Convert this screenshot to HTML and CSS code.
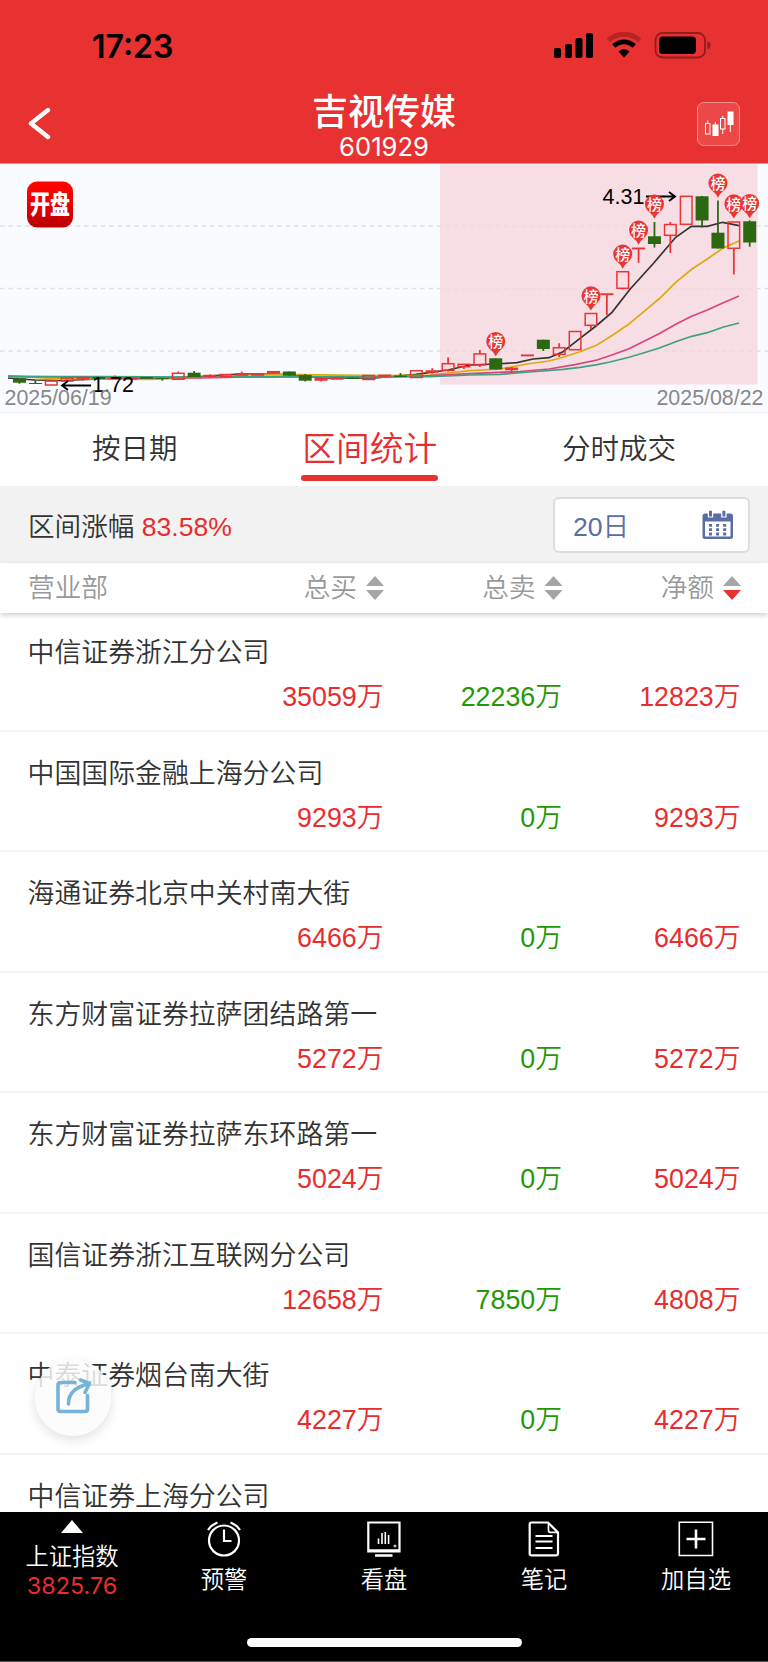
FILE: index.html
```
<!DOCTYPE html>
<html lang="zh-CN">
<head>
  <meta charset="UTF-8">
  <meta name="viewport" content="width=device-width, initial-scale=1.0">
  <title>吉视传媒 601929</title>
  <link rel="stylesheet" href="styles.css">
</head>
<body>
  <header class="header">
    <div class="status-bar">
      <span class="time">17:23</span>
      <svg class="status-icons" width="160" height="30" viewBox="0 0 160 30">
        <rect x="1" y="17" width="7" height="10" rx="2"/>
        <rect x="12" y="13" width="7" height="14" rx="2"/>
        <rect x="22.500" y="7" width="7" height="20" rx="2"/>
        <rect x="33" y="2" width="7" height="25" rx="2"/>
        <path d="M55.500 9.500a22.500 22.500 0 0 1 31 0" fill="none" stroke="#b82424" stroke-width="5"/>
        <path d="M60.800 15a14.500 14.500 0 0 1 20.400 0" fill="none" stroke="#000" stroke-width="4.800"/>
        <path d="M65.500 20.500a8 8 0 0 1 11 0L71 26.500z"/>
        <rect x="102.500" y="2" width="49.500" height="24.500" rx="7" fill="none" stroke="#8f1e1e" stroke-width="1.800"/>
        <rect x="106" y="5.500" width="37" height="17.500" rx="4"/>
        <path d="M154.500 10.300q3 1 3 4t-3 4z" fill="#8f1e1e"/>
      </svg>
    </div>
    <div class="title-bar">
      <svg class="back" width="24" height="34" viewBox="0 0 24 34">
        <path d="M21 3L4 16.500 21 30" fill="none" stroke="#fff" stroke-width="4.400" stroke-linecap="round" stroke-linejoin="round"/>
      </svg>
      <div class="title">
        <h1>吉视传媒</h1>
        <p>601929</p>
      </div>
      <div class="kline-button">
        <svg width="42" height="42" viewBox="0 0 42 42" fill="none" stroke="#fff">
          <rect x="7.500" y="20.500" width="4.500" height="10.500"/>
          <path d="M9.700 17.500v3M17.300 19v3M24.800 13v3M24.800 26v5M32.300 21v8"/>
          <rect x="15" y="22" width="5" height="10.500" fill="#fff"/>
          <rect x="22.500" y="15.500" width="4.500" height="10.500"/>
          <rect x="30" y="9" width="5" height="12.500" fill="#fff"/>
        </svg>
      </div>
    </div>
  </header>

  <svg class="chart" id="chart" viewBox="0 164 768 248" width="768" height="248">
    <defs>
      <linearGradient id="logoFill" x1="0" y1="0" x2="0" y2="1">
        <stop offset="0" stop-color="#ff0600"/>
        <stop offset="0.400" stop-color="#f00000"/>
        <stop offset="1" stop-color="#b80000"/>
      </linearGradient>
    </defs>
    <g class="grid">
      <path d="M0 226H768M0 288.500H768M0 351H768"/>
    </g>
    <rect class="range" x="440" y="164.500" width="317.500" height="220"/>
    <g id="averages"></g>
    <g id="candles"></g>
    <g class="arrows">
      <path d="M62 385.500H91M68 381l-6 4.500 6 4.500"/>
      <path d="M646 196.500H675M669 192l6 4.500-6 4.500"/>
    </g>
    <text class="price" x="92" y="391.700">1.72</text>
    <text class="price" x="602.500" y="203.700">4.31</text>
    <g id="markers"></g>
    <text class="date" x="4.500" y="405">2025/06/19</text>
    <text class="date" x="763.500" y="405" text-anchor="end">2025/08/22</text>
    <rect x="27" y="181.500" width="46" height="46" rx="10" fill="url(#logoFill)"/>
    <text class="logo-text" transform="translate(50 214) scale(1 1.300)" text-anchor="middle">开盘</text>
  </svg>

  <nav class="tabs">
    <a class="tab">按日期</a>
    <a class="tab active">区间统计</a>
    <a class="tab">分时成交</a>
  </nav>

  <section class="filter">
    <p>区间涨幅 <span class="red">83.58%</span></p>
    <div class="period">
      <span>20日</span>
      <svg width="32" height="30" viewBox="0 0 32 30">
        <path d="M2.500 3.500H5.800V7.500H11.200V3.500H19.200V7.500H24.600V3.500H28.500Q31 3.500 31 6V26.500Q31 29 28.500 29H3Q.5 29 .5 26.500V6Q.5 3.500 3 3.500zM3 11.500V26.500H28.500V11.500z" fill="#5a6ea5" fill-rule="evenodd"/>
        <path d="M8.500 .8V6.500M21.900 .8V6.500" stroke="#5a6ea5" stroke-width="3"/>
        <path d="M8.500 14V26M15.600 14V26M22.700 14V26" stroke="#5a6ea5" stroke-width="3" stroke-dasharray="2.800 1.500"/>
      </svg>
    </div>
  </section>

  <section class="columns">
    <span>营业部</span>
    <span class="sort">总买 <i class="up"></i><i class="down"></i></span>
    <span class="sort">总卖 <i class="up"></i><i class="down"></i></span>
    <span class="sort">净额 <i class="up"></i><i class="down on"></i></span>
  </section>

  <main class="list">
    <div class="row">
      <h2>中信证券浙江分公司</h2>
      <p><span class="red">35059万</span><span class="green">22236万</span><span class="red">12823万</span></p>
    </div>
    <div class="row">
      <h2>中国国际金融上海分公司</h2>
      <p><span class="red">9293万</span><span class="green">0万</span><span class="red">9293万</span></p>
    </div>
    <div class="row">
      <h2>海通证券北京中关村南大街</h2>
      <p><span class="red">6466万</span><span class="green">0万</span><span class="red">6466万</span></p>
    </div>
    <div class="row">
      <h2>东方财富证券拉萨团结路第一</h2>
      <p><span class="red">5272万</span><span class="green">0万</span><span class="red">5272万</span></p>
    </div>
    <div class="row">
      <h2>东方财富证券拉萨东环路第一</h2>
      <p><span class="red">5024万</span><span class="green">0万</span><span class="red">5024万</span></p>
    </div>
    <div class="row">
      <h2>国信证券浙江互联网分公司</h2>
      <p><span class="red">12658万</span><span class="green">7850万</span><span class="red">4808万</span></p>
    </div>
    <div class="row">
      <h2>中泰证券烟台南大街</h2>
      <p><span class="red">4227万</span><span class="green">0万</span><span class="red">4227万</span></p>
    </div>
    <div class="row">
      <h2>中信证券上海分公司</h2>
    </div>
  </main>

  <div class="share">
    <svg width="38" height="40" viewBox="0 0 38 40" fill="none" stroke="#73b4d8" stroke-width="3.600" stroke-linecap="round" stroke-linejoin="round">
      <path d="M20 5.500H5.500Q3 5.500 3 8V32Q3 34.500 5.500 34.500H30Q32.500 34.500 32.500 32V18.500"/>
      <path d="M13.500 27Q13 12 33 7M25.500 3L34.500 6.500 30 15.500"/>
    </svg>
  </div>

  <footer class="bottom">
    <div class="item index">
      <i class="triangle"></i>
      <span>上证指数</span>
      <b>3825.76</b>
    </div>
    <div class="item">
      <svg width="36" height="36" viewBox="0 0 36 36" fill="none" stroke="#fff" stroke-width="2.200">
        <circle cx="18" cy="19.500" r="15"/>
        <path d="M18 8.500V20H25.500"/>
        <path d="M2 9Q5 4 11.500 1.500M34 9Q31 4 24.500 1.500"/>
      </svg>
      <span>预警</span>
    </div>
    <div class="item">
      <svg width="36" height="36" viewBox="0 0 36 36" fill="none" stroke="#fff" stroke-width="2.200">
        <path d="M2.300 1.500H33.500V30.500H2.300z"/>
        <path d="M3 29.500H33M9 34.500H26.500" stroke-width="2.500"/>
        <path d="M12.500 17.500V23M16 12V23M19.300 11V23M22.600 14V23" stroke-width="1.600"/>
        <circle cx="29" cy="25" r="1" stroke-width="1"/>
      </svg>
      <span>看盘</span>
    </div>
    <div class="item">
      <svg width="36" height="36" viewBox="0 0 36 36" fill="none" stroke="#fff" stroke-width="2.200">
        <path d="M5.500 1.500H22L32 11.500V32.500Q32 34.300 30 34.300H5.500Q3.700 34.300 3.700 32.500V3.300Q3.700 1.500 5.500 1.500z"/>
        <path d="M22.500 2V9.500Q22.500 11.300 24.300 11.300H31.500" stroke-width="1.700"/>
        <path d="M9.500 15H26.500M9.500 20.500H26.500M9.500 27H26.500" stroke-width="1.900"/>
      </svg>
      <span>笔记</span>
    </div>
    <div class="item">
      <svg width="36" height="36" viewBox="0 0 36 36" fill="none" stroke="#fff" stroke-width="1.600">
        <path d="M1.300 1.300H34.500V34.500H1.300z"/>
        <path d="M8.500 18H27.500M18 8.500V27.500" stroke-width="2.600"/>
      </svg>
      <span>加自选</span>
    </div>
    <div class="home-indicator"></div>
  </footer>

  <script src="chart.js"></script>
</body>
</html>
```

FILE: styles.css
```
* {
  box-sizing: border-box;
  margin: 0;
  padding: 0;
}

body {
  width: 768px;
  height: 1662px;
  display: flex;
  flex-direction: column;
  position: relative;
  overflow: hidden;
  background: #fff;
  color: #333;
  font-family: "Liberation Sans", "Noto Sans CJK SC", sans-serif;
  font-size: 27px;
  font-weight: 350;
}

svg {
  display: block;
  flex: none;
}

.red {
  color: #e72d2d;
}

.green {
  color: #1f980a;
}

/* header */
.header {
  height: 164px;
  flex: none;
  background: #e83131;
  border-bottom: 1px solid #f08c8e;
}

.status-bar {
  height: 91px;
  padding: 31px 55.5px 0 92px;
  display: flex;
  justify-content: space-between;
}

.time {
  font: 600 32px/31px Inter, sans-serif;
  color: #000;
}

.title-bar {
  height: 72px;
  padding: 0 28px 0 27px;
  display: grid;
  grid-template-columns: 44px 1fr 43px;
  color: #fff;
}

.back {
  margin-top: 16px;
}

.title {
  text-align: center;
}

.title h1 {
  font-size: 36px;
  line-height: 44px;
  font-weight: 500;
}

.title p {
  font: 400 25.6px/24px Inter, sans-serif;
}

.kline-button {
  width: 43px;
  height: 44px;
  margin-top: 11px;
  border: 1px solid #f38f8f;
  border-radius: 7px;
  background: #ec4848;
}

/* chart */
.chart {
  background: #fafbff;
}

.grid {
  stroke: #e0e1e6;
  stroke-width: 1.3;
  stroke-dasharray: 4.5 3.9;
}

.range {
  fill: #f5d5dc;
  fill-opacity: 0.76;
}

.arrows {
  fill: none;
  stroke: #000;
  stroke-width: 1.8;
}

.price {
  font-size: 21.5px;
  fill: #000;
}

.date {
  font-size: 21.4px;
  fill: #888;
}

.logo-text {
  font-family: "Noto Sans CJK SC", sans-serif;
  font-size: 20px;
  font-weight: 900;
  fill: #fff;
}

.marker-text {
  font-family: "Noto Sans CJK SC", sans-serif;
  font-size: 15px;
  font-weight: 500;
  fill: #fff;
}

/* tabs */
.tabs {
  height: 74px;
  flex: none;
  padding: 0 92px;
  display: flex;
  justify-content: space-between;
  border-top: 1px solid #eeeff2;
}

.tab {
  font-size: 28.5px;
  line-height: 73px;
}

.tab.active {
  display: flex;
  flex-direction: column;
  padding: 0 1px;
  font-size: 33.7px;
  line-height: 73px;
  color: #e72d2d;
}

.tab.active::after {
  content: "";
  height: 5.5px;
  margin: -11px -1px 0;
  border-radius: 3px;
  background: #e83131;
}

/* filter */
.filter {
  height: 77px;
  flex: none;
  padding: 0 18px 0 28px;
  display: flex;
  align-items: center;
  justify-content: space-between;
  background: #f2f2f2;
  font-size: 26.6px;
}

.period {
  width: 197px;
  height: 56px;
  padding: 0 14px 0 18px;
  display: flex;
  align-items: center;
  justify-content: space-between;
  border: 2px solid #ddd;
  border-radius: 6px;
  background: #fff;
  color: #5a6ea5;
}

/* column heads */
.columns {
  height: 50px;
  flex: none;
  padding: 0 27px 0 28px;
  display: grid;
  grid-template-columns: 1fr 178.5px 178.5px 178.5px;
  font-size: 26.7px;
  line-height: 51px;
  color: #999;
  box-shadow: 0 2px 5px rgba(0, 0, 0, 0.2);
  z-index: 1;
}

.sort {
  display: grid;
  grid-template-areas: "label up" "label down";
  grid-template-columns: 1fr 18px;
  grid-template-rows: 25px 25px;
  column-gap: 9px;
  text-align: right;
}

.up,
.down {
  width: 18px;
  height: 10px;
  background: #a5a5a5;
}

.up {
  grid-area: up;
  align-self: end;
  margin-bottom: 2px;
  clip-path: polygon(50% 0, 100% 100%, 0 100%);
}

.down {
  grid-area: down;
  margin-top: 2px;
  clip-path: polygon(0 0, 100% 0, 50% 100%);
}

.down.on {
  background: #e83131;
}

/* list */
.list {
  height: 901px;
  flex: none;
  margin-top: -2px;
  overflow: hidden;
}

.row {
  height: 120.5px;
  padding: 22px 27.5px 0;
  border-bottom: 2px solid #f4f4f4;
}

.row h2 {
  font-size: 26.9px;
  font-weight: 350;
  line-height: 40px;
}

.row p {
  display: grid;
  grid-template-columns: 1fr 178.5px 178.5px;
  font-size: 26.8px;
  line-height: 40px;
  padding-top: 4px;
  text-align: right;
}

/* floating share button */
.share {
  position: absolute;
  left: 35px;
  top: 1359px;
  width: 76px;
  height: 77px;
  padding: 18px 0 0 20px;
  border-radius: 50%;
  background: rgba(251, 251, 251, 0.83);
  box-shadow: 0 4px 12px rgba(0, 0, 0, 0.12);
  z-index: 2;
}

/* bottom bar */
.bottom {
  height: 150px;
  flex: none;
  margin-top: auto;
  padding-top: 8px;
  display: grid;
  grid-template-columns: 144px 160px 160px 160px 144px;
  grid-template-rows: 118px 10px;
  background: #000;
  border-bottom: 1px solid #555;
  color: #fff;
  z-index: 1;
}

.item {
  display: flex;
  flex-direction: column;
  align-items: center;
  font-size: 23.3px;
  line-height: 30px;
}

.item svg {
  margin-top: 1px;
  margin-bottom: 8px;
}

.triangle {
  width: 22px;
  height: 13px;
  background: #fff;
  clip-path: polygon(50% 0, 100% 100%, 0 100%);
}

.index span {
  margin-top: 9px;
}

.index b {
  font: 400 23.4px/28px Inter, sans-serif;
  color: #e72d2d;
}

.home-indicator {
  grid-column: 1 / -1;
  justify-self: center;
  width: 275px;
  height: 9px;
  border-radius: 5px;
  background: #fff;
}
```

FILE: chart.js
```
const NS = 'http://www.w3.org/2000/svg';
const RED = '#e93535';
const GREEN = '#2c6811';
const FIRST_X = 19.5;
const STEP = 15.874;

// [colour, body top, body bottom, high, low]
const candles = [
  ['g', 378.3, 382.7, 378, 383.7], ['g', 383, 384, 380.5, 384], ['r', 381, 385, 381, 385],
  ['r', 378, 381, 378, 381], ['r', 377.5, 378.5, 377, 380.5], ['g', 377, 379, 377, 379],
  ['r', 378, 378.7, 375.5, 379], ['r', 378, 379, 378, 379], ['g', 377, 378.7, 377, 379],
  ['g', 378, 379, 378, 380.7], ['r', 373.3, 379.3, 371.5, 379], ['g', 372.7, 377, 371, 377],
  ['r', 375.5, 376.3, 374.3, 377.5], ['r', 374.5, 376.7, 374, 377], ['r', 374, 375, 371.7, 375],
  ['r', 374, 375, 374, 375], ['r', 371.7, 373, 371, 373.5], ['g', 371.5, 375.7, 371.5, 376],
  ['g', 374.9, 380.7, 374, 381.5], ['r', 378.7, 380, 378, 381.5], ['r', 378, 379, 378, 379],
  ['g', 377.6, 379, 377.5, 379], ['r', 375.5, 379.5, 375, 380], ['r', 375.3, 376, 375, 378],
  ['g', 375.5, 377, 373, 377], ['r', 370.8, 377.5, 370, 378], ['r', 371, 372, 368.3, 373.7],
  ['r', 363.7, 370.3, 357.5, 371.5], ['r', 364.3, 366.7, 364, 369], ['r', 353.9, 364.9, 350, 367],
  ['g', 358.3, 369.5, 358.3, 369.5], ['r', 368.3, 369.5, 367, 373.3], ['r', 355.2, 355.6, 355, 355.6],
  ['g', 339.7, 349, 339.7, 351], ['r', 347.8, 354.3, 343.3, 357], ['r', 331.5, 349.7, 331, 350],
  ['r', 313.5, 325.3, 313, 329], ['r', 294, 294.4, 294, 315], ['r', 271.7, 288.3, 271, 289.5],
  ['r', 248.3, 248.7, 248, 262.7], ['g', 236.3, 244, 222, 247.5], ['r', 224.5, 235.3, 222, 253],
  ['r', 196.3, 224.3, 196, 225], ['g', 196.3, 220.5, 196, 227.5], ['g', 232.7, 248.5, 200.5, 248.5],
  ['r', 222, 248.3, 222, 274.5], ['g', 221.3, 242.5, 220.3, 246.7]
];

// index of the candle and centre of the pin above it
const markers = [[30, 341.7], [36, 296], [38, 254.3], [39, 230.3], [40, 204.3], [44, 183.3], [45, 204], [46, 203.7]];

const averages = [
  ['#333333', '8,378 35,380 60,380.5 100,379 150,378.5 200,376.5 240,374 290,374.5 320,378 375,378 416,374.3 448,370 470,365 495,364 517,362.7 533,359 549,357.7 563,351.7 580,338.3 596,326 612,312.3 630,289.3 654,262.7 675.7,237.3 691.3,226.3 707.3,226.3 722.7,222.3 739,225.7'],
  ['#dfaa10', '8,375.7 50,378.5 100,379 150,379.5 200,377.5 250,375 300,374.7 380,375.7 430,375 470,370.7 500,369 527,364 549,361 563,357.3 580,351.7 597,345 614,334.3 629.3,323.7 645,310.7 660,298 675.7,282.3 691.7,269.3 707.3,259 722.7,248.3 739,241'],
  ['#d9447f', '8,376.3 100,377.3 200,378 250,377 300,377 380,377 430,375.7 470,373.7 520,371.5 549,369 575,364.7 597,360 614,354.3 629,348.7 645,340.7 660,333.3 675.7,324.3 691.7,316.3 707.3,310 722.7,303 739,296'],
  ['#3da182', '8,376.7 100,376.7 200,377 300,376.7 380,377 430,376.7 470,375 500,374.3 530,372 563,369.3 580,367.3 597,364.7 610,362 629,357.3 643.3,353 660,347.7 675.7,341.7 691.7,336.3 707.3,332.7 722.7,327.3 739,323']
];

function add(parent, tag, attrs) {
  const el = document.createElementNS(NS, tag);
  for (const key in attrs) el.setAttribute(key, attrs[key]);
  document.getElementById(parent).appendChild(el);
  return el;
}

candles.forEach(([type, top, bottom, high, low], i) => {
  const x = FIRST_X + i * STEP;
  const color = type === 'r' ? RED : GREEN;
  if (type === 'r') {
    add('candles', 'path', {
      d: `M${x} ${high}V${top}M${x} ${bottom}V${low}`,
      stroke: color, 'stroke-width': 1.8
    });
    add('candles', 'rect', {
      x: x - 5.8, y: top, width: 11.6, height: bottom - top,
      fill: 'none', stroke: color, 'stroke-width': 1.5
    });
  } else {
    add('candles', 'path', { d: `M${x} ${high}V${low}`, stroke: color, 'stroke-width': 1.8 });
    add('candles', 'rect', { x: x - 6.5, y: top, width: 13, height: bottom - top, fill: color });
  }
});

averages.forEach(([color, points]) => {
  add('averages', 'polyline', { points, fill: 'none', stroke: color, 'stroke-width': 1.7 });
});

markers.forEach(([i, y]) => {
  const x = FIRST_X + i * STEP;
  add('markers', 'path', {
    d: `M${x - 6.5} ${y + 6.7}A9.5 9.5 0 1 1 ${x + 6.5} ${y + 6.7}Q${x + 2} ${y + 10} ${x} ${y + 14.5}Q${x - 2} ${y + 10} ${x - 6.5} ${y + 6.7}z`,
    fill: RED
  });
  add('markers', 'text', { x, y: y + 5.5, 'text-anchor': 'middle', class: 'marker-text' }).textContent = '榜';
});
```
